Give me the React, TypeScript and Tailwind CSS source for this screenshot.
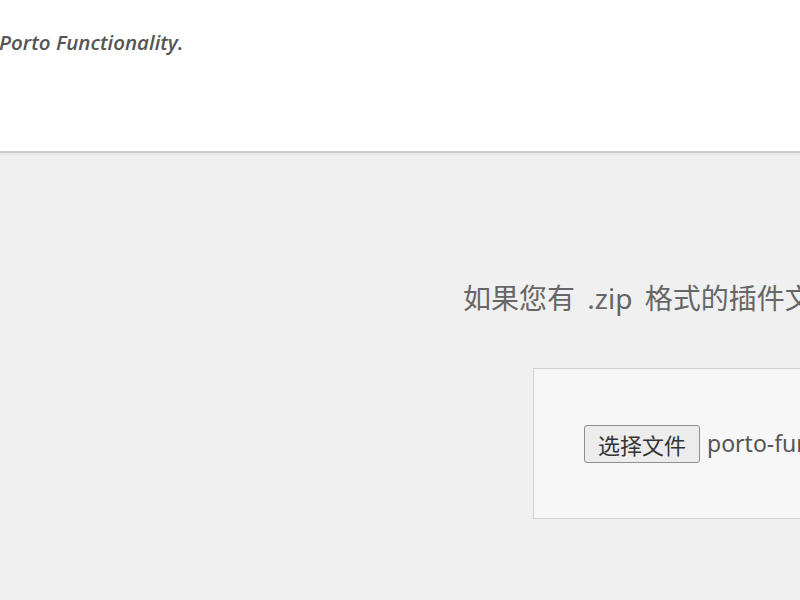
export default function App() {
  return (
    <div className="w-[800px] h-[600px] overflow-hidden bg-[#f0f0f0] font-['Open_Sans','Noto_Sans_CJK_SC',sans-serif]">
      <div className="h-[153px] bg-white border-b-2 border-[#cccccc] shadow-[0_2px_3px_rgba(0,0,0,0.05)]">
        <p className="pt-[28px] -ml-px text-[20.5px] leading-[28px] italic font-semibold text-[#555555] whitespace-nowrap">
          Porto Functionality.
        </p>
      </div>

      <p className="mt-[126px] pl-[463px] text-[28px] leading-[38px] [word-spacing:5px] text-[#666666] whitespace-nowrap font-['Noto_Sans','Noto_Sans_CJK_SC',sans-serif]">
        如果您有 .zip 格式的插件文件，可以在这里通过上传安装或更新。
      </p>

      <div className="mt-[51px] ml-[533px] w-[600px] h-[151px] bg-[#f7f7f7] border border-[#d2d2d2] flex items-center pl-[50px]">
        <button className="h-[38px] px-[13px] border border-[#8f8f8f] rounded-[3px] bg-[#ececec] text-[22px] leading-none text-[#333333] font-['Noto_Sans_CJK_SC',sans-serif]">
          选择文件
        </button>
        <span className="ml-[7px] text-[23px] text-[#555555] whitespace-nowrap font-['Noto_Sans',sans-serif]">
          porto-functionality.zip
        </span>
      </div>
    </div>
  );
}
